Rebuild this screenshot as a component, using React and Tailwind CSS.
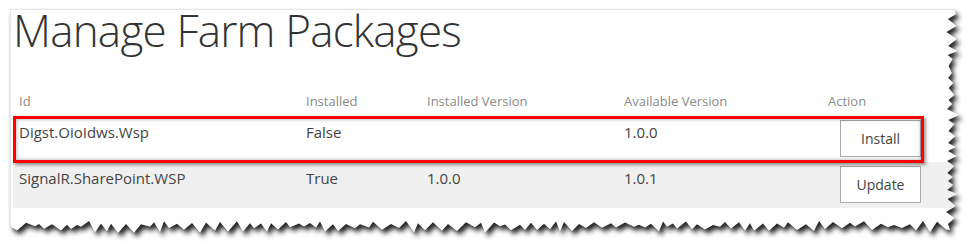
import React from "react";

function makeTorn() {
  let s = 12345;
  const r = () => {
    s = (s * 1103515245 + 12345) % 2147483648;
    return s / 2147483648;
  };
  const pts = [];
  pts.push([10, 9]);
  pts.push([953, 9]);
  let i = 0;
  for (let y = 14; y < 226; y += 4 + Math.floor(r() * 4)) {
    const x = i % 2 ? 946 + r() * 3 : 951 + r() * 8;
    pts.push([x, y]);
    i++;
  }
  pts.push([950, 230]);
  i = 0;
  for (let x = 946; x > 12; x -= 4 + Math.floor(r() * 6)) {
    const y = i % 2 ? 221 + r() * 4 : 226 + r() * 7;
    pts.push([x, y]);
    i++;
  }
  pts.push([10, 226]);
  return "M" + pts.map((p) => p[0].toFixed(1) + "," + p[1].toFixed(1)).join(" L") + " Z";
}

const P = makeTorn();

function TornEdges() {
  return (
    <svg
      className="absolute left-0 top-0 pointer-events-none"
      width="976"
      height="250"
      viewBox="0 0 976 250"
    >
      <defs>
        <mask id="outside">
          <rect x="0" y="0" width="976" height="250" fill="white" />
          <path d={P} fill="black" />
        </mask>
        <filter id="blur" x="-5%" y="-5%" width="110%" height="110%">
          <feGaussianBlur stdDeviation="2.4" />
        </filter>
      </defs>
      <g mask="url(#outside)">
        <rect x="0" y="0" width="976" height="250" fill="white" />
        <path d={P} transform="translate(3,4)" fill="#222" filter="url(#blur)" />
      </g>
    </svg>
  );
}

const rows = [
  { id: "Digst.OioIdws.Wsp", installed: "False", iv: "", av: "1.0.0", action: "Install", bg: "bg-white" },
  { id: "SignalR.SharePoint.WSP", installed: "True", iv: "1.0.0", av: "1.0.1", action: "Update", bg: "bg-[#f0f0f0]" },
];

export default function App() {
  return (
    <div
      className="relative w-[976px] h-[250px] bg-white overflow-hidden"
      style={{ fontFamily: '"Open Sans", "Noto Sans", sans-serif' }}
    >
      <div className="ml-[10px] mt-[9px] w-[946px] h-[230px] border-l border-t border-[#e4e4e4]">
        <h1 className="text-[44px] leading-[41px] font-light text-[#333] tracking-[-0.8px] pl-[2px]">
          Manage Farm Packages
        </h1>
        <div className="ml-[2px] mt-[41px] pl-[6px] grid grid-cols-[287px_121px_197px_204px_1fr] text-[13px] leading-[18px] text-[#8a8a8a]">
          <div>Id</div>
          <div>Installed</div>
          <div>Installed Version</div>
          <div>Available Version</div>
          <div>Action</div>
        </div>
        <div className="ml-[2px] mt-[6px]">
          {rows.map((r) => (
            <div
              key={r.id}
              className={`${r.bg} h-[46px] pl-[6px] grid grid-cols-[287px_121px_197px_204px_1fr] text-[15px] leading-[20px] text-[#444]`}
            >
              <div className="pt-[6px]">{r.id}</div>
              <div className="pt-[6px]">{r.installed}</div>
              <div className="pt-[6px]">{r.iv}</div>
              <div className="pt-[6px]">{r.av}</div>
              <div className="pt-[4px]">
                <button className="ml-[12px] w-[81px] h-[37px] border border-[#ababab] bg-white text-[14px] text-[#444]">
                  {r.action}
                </button>
              </div>
            </div>
          ))}
        </div>
      </div>
      <TornEdges />
      <div className="absolute left-[13px] top-[116px] w-[911px] h-[47px] border-[3px] border-[#ff0000] shadow-[2px_2px_3px_rgba(0,0,0,0.4),inset_0_0_4px_rgba(0,0,0,0.35)] pointer-events-none" />
    </div>
  );
}
